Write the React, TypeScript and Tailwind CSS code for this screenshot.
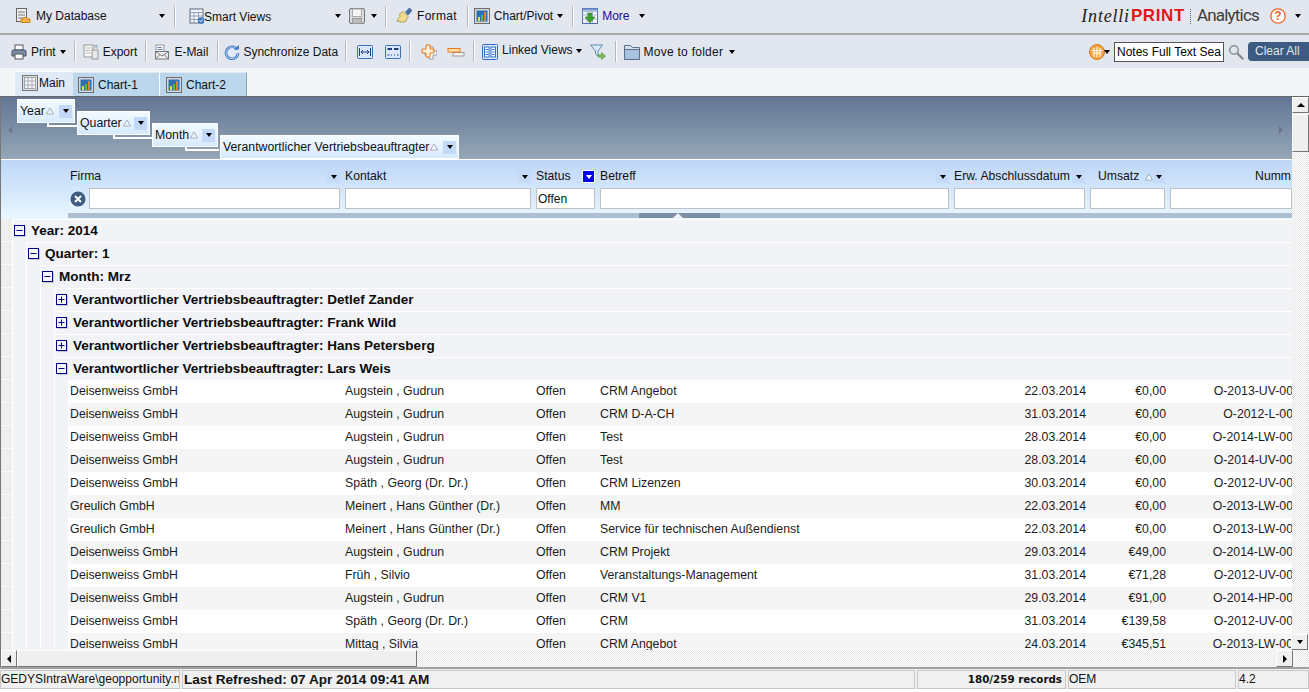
import React from "react";

const Caret = ({ className = "" }: { className?: string }) => (
  <span className={"inline-block w-0 h-0 border-l-[3.5px] border-r-[3.5px] border-t-[4px] border-l-transparent border-r-transparent border-t-black " + className} />
);
const Sep = ({ className = "" }: { className?: string }) => <span className={"w-px h-[21px] bg-[#b4b8bf] border-r border-white box-content shrink-0 " + className} />;

const Ic = ({ children, className = "" }: { children: React.ReactNode; className?: string }) => (
  <svg viewBox="0 0 16 16" width={16} height={16} className={"shrink-0 " + className}>{children}</svg>
);

const DbIcon = () => (
  <Ic>
    <rect x="1.500" y=".5" width="10" height="13" fill="#eef0f2" stroke="#666" />
    <path d="M3 4h7M3 7h7M3 10h7" stroke="#777" />
    <path d="M6 14.500V11h2l1-1.500h3l1 1.500h2v3.500z" fill="#f7b04a" stroke="#c98520" />
  </Ic>
);
const SmartIcon = () => (
  <Ic>
    <rect x="1" y="1" width="13" height="14" fill="#f4f6fa" stroke="#5a6a80" />
    <path d="M1 4.500h13M5 4.500V15M9.500 4.500V15M1 8h13M1 11.500h13" stroke="#8fa0b8" />
    <circle cx="12" cy="12.500" r="3.200" fill="#3a78c8" />
    <path d="M10.500 12.500l1.200 1.200 2-2.200" stroke="#fff" fill="none" />
  </Ic>
);
const SaveIcon = () => (
  <Ic>
    <path d="M.5 2a1.500 1.500 0 0 1 1.500-1.500h12a1.500 1.500 0 0 1 1.500 1.500v12a1.500 1.500 0 0 1-1.500 1.500H2a1.500 1.500 0 0 1-1.500-1.500z" fill="#d8dade" stroke="#777" />
    <rect x="3.500" y="1" width="9" height="7.500" fill="#f4f4f4" stroke="#aaa" />
    <rect x="3.500" y="10.500" width="9" height="5" fill="#bcbcbc" stroke="#999" />
  </Ic>
);
const BrushIcon = () => (
  <Ic>
    <path d="M9.500 4l4-4 2.500 2.500 -4 4.500z" fill="#4a6fa8" stroke="#2f4a78" strokeWidth=".6" />
    <path d="M7 3.500l5.500 5.500 -1.500 1.500 -1 3 -1.500 -.5 -1 1.500 -1.500 -1 -1.500 1 -1 -1.500 -2.500 .5 1 -3 2 -2 -.5 -2.500z" fill="#efdc8a" stroke="#8a7a30" strokeWidth=".6" />
  </Ic>
);
const ChartIcon = () => (
  <Ic>
    <rect x=".5" y=".5" width="15" height="15" fill="#d4d8dc" stroke="#6d6d6d" />
    <rect x="2.500" y="2.500" width="11" height="11" fill="#2f6fb0" />
    <rect x="4" y="9" width="2" height="4" fill="#e8e050" />
    <rect x="7" y="7" width="2" height="6" fill="#58b848" />
    <rect x="10" y="4" width="2" height="9" fill="#e88030" />
  </Ic>
);
const MoreIcon = () => (
  <Ic>
    <rect x=".5" y=".5" width="15" height="15" fill="#f4f6fa" stroke="#5070b0" />
    <path d="M.5 3.500h15M.5 7h15M.5 11h15M5 3V15M10.500 3V15" stroke="#a9bad8" />
    <path d="M.5 1.500h15" stroke="#7090d0" strokeWidth="2" />
    <path d="M6 5h4v4h3l-5 6 -5-6h3z" fill="#3fa02c" stroke="#2a7a1c" strokeWidth=".5" />
  </Ic>
);
const PrintIcon = () => (
  <Ic>
    <rect x="4" y="1" width="8" height="5" fill="#fff" stroke="#555" />
    <path d="M1 7.500a1.500 1.500 0 0 1 1.500-1.500h11a1.500 1.500 0 0 1 1.500 1.500V12H1z" fill="#7d8fa8" stroke="#3f4f68" />
    <rect x="4" y="10" width="8" height="5" fill="#fff" stroke="#555" />
  </Ic>
);
const ExportIcon = () => (
  <Ic>
    <rect x="1" y="1" width="9" height="12" fill="#f6f6f6" stroke="#999" />
    <rect x="9" y="6" width="6" height="9" fill="#e8e8e8" stroke="#999" />
    <path d="M11 1.500h3v3M14 1.500l-3 3" stroke="#9ab" fill="none" />
    <path d="M2.500 4h6M2.500 6.500h5M2.500 9h5" stroke="#bbb" />
  </Ic>
);
const MailIcon = () => (
  <Ic>
    <rect x="2" y="1" width="8" height="9" fill="#f6f6f6" stroke="#999" />
    <path d="M3.500 3.500h4M3.500 5.500h5" stroke="#5b7fb8" />
    <rect x="1.500" y="7.500" width="13" height="7.500" fill="#f0f0f0" stroke="#777" />
    <path d="M1.500 7.500L8 12l6.500-4.500M1.500 15L6 10.500M14.500 15L10 10.500" stroke="#777" fill="none" />
  </Ic>
);
const SyncIcon = () => (
  <Ic>
    <circle cx="8" cy="8.500" r="6.500" fill="#dfeafa" />
    <path d="M13 5.500A6 6 0 1 0 14 9" fill="none" stroke="#3f78c0" strokeWidth="2.600" />
    <path d="M13 5.500A6 6 0 1 0 14 9" fill="none" stroke="#b7d3f0" strokeWidth="1" />
    <path d="M10 5.500h5V1z" fill="#3f78c0" />
  </Ic>
);
const BlueBox = ({ children }: { children: React.ReactNode }) => (
  <Ic>
    <rect x=".5" y="1.500" width="15" height="13" rx="1" fill="#dbe8fa" stroke="#3f6fb8" />
    {children}
  </Ic>
);
const PlusIcon = () => (
  <Ic>
    <path d="M7 1.500h4v4h4v4h-4v4H7v-4H3v-4h4z" fill="#fff" stroke="#999" transform="translate(1 1.500)" />
    <path d="M5 1h4v4h4v4H9v4H5V9H1V5h4z" fill="#fdf0d8" stroke="#e8781c" />
  </Ic>
);
const StackIcon = () => (
  <svg viewBox="0 0 18 16" width={18} height={16} className="shrink-0">
    <rect x="6" y="8.500" width="11" height="3.500" fill="#f4f4f4" stroke="#999" />
    <rect x="1" y="4.500" width="12" height="3.500" fill="#fde2a8" stroke="#e8781c" />
  </svg>
);
const LinkedIcon = () => (
  <Ic>
    <rect x=".5" y=".5" width="15" height="15" rx="1" fill="#dbe8fa" stroke="#2f6fc8" />
    <rect x="2.500" y="3" width="4.500" height="10" fill="#fff" stroke="#2f6fc8" />
    <rect x="9" y="3" width="4.500" height="10" fill="#fff" stroke="#2f6fc8" />
    <path d="M3.500 5.500h2.500M3.500 8h2.500M3.500 10.500h2.500M10 5.500h2.500M10 8h2.500M10 10.500h2.500" stroke="#2f6fc8" />
  </Ic>
);
const FilterIcon = () => (
  <Ic>
    <path d="M.5 1h12L8 7v5L5.500 10V7z" fill="#dceaf6" stroke="#5a8ab0" />
    <path d="M8 11h3.500V8.500L15.500 12 11.500 15.500V13H8z" fill="#7cc050" stroke="#4a8a30" strokeWidth=".6" />
  </Ic>
);
const FolderIcon = () => (
  <Ic>
    <path d="M.5 1.500h6l2 2h7v12H.5z" fill="#d4e2f0" stroke="#5a7088" />
    <path d="M.5 5.500h15v10H.5z" fill="#a8c4e0" stroke="#5a7088" />
  </Ic>
);
const GlobeIcon = () => (
  <Ic>
    <circle cx="8" cy="8" r="7.500" fill="#f5a63c" stroke="#d87a18" />
    <path d="M5 4v9M8 3v10M11 4v9M2.500 6.500h11M4 9h8" stroke="#fff" strokeWidth="1.100" />
  </Ic>
);
const GlassIcon = () => (
  <Ic>
    <circle cx="6" cy="6" r="4.300" fill="#dfe6ec" stroke="#8a9298" strokeWidth="1.600" />
    <path d="M9.500 9.500l5 5" stroke="#888" strokeWidth="2.400" strokeLinecap="round" />
  </Ic>
);
const GridIcon = () => (
  <Ic>
    <rect x=".5" y=".5" width="15" height="15" fill="#dcdcdc" stroke="#777" />
    <rect x="2.500" y="2.500" width="11" height="11" fill="#f6f6f6" stroke="#9aa" />
    <path d="M6 2.500V13.500M10 2.500V13.500M2.500 6h11M2.500 10h11" stroke="#aab" />
  </Ic>
);

const Toggle = ({ open }: { open: boolean }) => (
  <svg viewBox="0 0 12 12" width={12} height={12} className="shrink-0">
    <rect x=".5" y=".5" width="10" height="10" fill="#f4f5f8" stroke="#000080" />
    <path d="M11.500 1.500V11.500H1.500" stroke="#c8c8d8" fill="none" />
    <path d="M2.500 5.500h6" stroke="#000080" />
    {!open && <path d="M5.500 2.500v6" stroke="#000080" />}
  </svg>
);

const Tri = () => (
  <svg viewBox="0 0 8 8" width={8} height={8} className="shrink-0">
    <path d="M4 1L7.500 7H.5z" fill="#ffffff" stroke="#8f98a4" strokeWidth=".8" />
    <path d="M4 3.200L5.600 6.200H2.400z" fill="#e4edf8" />
  </svg>
);

const Chip = ({ label, cls, line }: { label: string; cls: string; line?: string }) => (
  <div className={"relative h-6 flex items-center pl-[2px] pr-[2px] border border-white bg-gradient-to-b from-[#f2faff] to-[#d6eafe] shrink-0 whitespace-nowrap " + cls}>
    <span className="text-[12.3px] text-[#111]">{label}</span>
    <span className="ml-[1px]"><Tri /></span>
    <span className="ml-auto w-[13px] h-[13px] bg-[#c3d9f8] flex items-center justify-center"><Caret /></span>
    {line && <span className={"absolute h-[4px] border-b-2 border-l-2 border-white " + line} />}
  </div>
);

const H = ({ label, cls }: { label: string; cls: string }) => (
  <div className={"flex items-center justify-between " + cls}>
    <span>{label}</span>
    <span className="w-[13px] h-[13px] bg-[#c5daf8] flex items-center justify-center"><Caret /></span>
  </div>
);

const Input = ({ cls, value = "" }: { cls: string; value?: string }) => (
  <div className={"h-[21px] bg-white border border-[#c0c0c0] text-[12px] pl-[1px] leading-[20px] shrink-0 " + cls}>{value}</div>
);

const rows: string[][] = [
  ["Deisenweiss GmbH", "Augstein , Gudrun", "Offen", "CRM Angebot", "22.03.2014", "€0,00", "O-2013-UV-00"],
  ["Deisenweiss GmbH", "Augstein , Gudrun", "Offen", "CRM D-A-CH", "31.03.2014", "€0,00", "O-2012-L-00"],
  ["Deisenweiss GmbH", "Augstein , Gudrun", "Offen", "Test", "28.03.2014", "€0,00", "O-2014-LW-00"],
  ["Deisenweiss GmbH", "Augstein , Gudrun", "Offen", "Test", "28.03.2014", "€0,00", "O-2014-UV-00"],
  ["Deisenweiss GmbH", "Späth , Georg  (Dr. Dr.)", "Offen", "CRM Lizenzen", "30.03.2014", "€0,00", "O-2012-UV-00"],
  ["Greulich GmbH", "Meinert , Hans Günther (Dr.)", "Offen", "MM", "22.03.2014", "€0,00", "O-2013-LW-00"],
  ["Greulich GmbH", "Meinert , Hans Günther (Dr.)", "Offen", "Service für technischen Außendienst", "22.03.2014", "€0,00", "O-2013-LW-00"],
  ["Deisenweiss GmbH", "Augstein , Gudrun", "Offen", "CRM Projekt", "29.03.2014", "€49,00", "O-2014-LW-00"],
  ["Deisenweiss GmbH", "Früh , Silvio", "Offen", "Veranstaltungs-Management", "31.03.2014", "€71,28", "O-2012-UV-00"],
  ["Deisenweiss GmbH", "Augstein , Gudrun", "Offen", "CRM V1", "29.03.2014", "€91,00", "O-2014-HP-00"],
  ["Deisenweiss GmbH", "Späth , Georg  (Dr. Dr.)", "Offen", "CRM", "31.03.2014", "€139,58", "O-2012-UV-00"],
  ["Deisenweiss GmbH", "Mittag , Silvia", "Offen", "CRM Angebot", "24.03.2014", "€345,51", "O-2013-LW-00"],
];

const gutterW = ["w-[12px]", "w-[14px]", "w-[14px]", "w-[14px]", "w-[14px]"];
const Gutter = ({ n }: { n: number }) => (
  <>
    {gutterW.slice(0, n).map((w, i) => (
      <div key={i} className={"h-full shrink-0 border-r border-white " + w + (i === 0 ? " bg-[#eeeeee] border-b border-b-[#fafafa]" : " bg-[#f1f3f7]")} />
    ))}
  </>
);

const groups: { level: number; text: string; open: boolean }[] = [
  { level: 1, text: "Year: 2014", open: true },
  { level: 2, text: "Quarter: 1", open: true },
  { level: 3, text: "Month: Mrz", open: true },
  { level: 4, text: "Verantwortlicher Vertriebsbeauftragter: Detlef Zander", open: false },
  { level: 4, text: "Verantwortlicher Vertriebsbeauftragter: Frank Wild", open: false },
  { level: 4, text: "Verantwortlicher Vertriebsbeauftragter: Hans Petersberg", open: false },
  { level: 4, text: "Verantwortlicher Vertriebsbeauftragter: Lars Weis", open: true },
];

const dither = "bg-[repeating-conic-gradient(#e4e4e4_0_25%,#ffffff_0_50%)] bg-[length:2px_2px]";
const SB = ({ children, cls }: { children?: React.ReactNode; cls: string }) => (
  <div className={"bg-[#efefef] border border-t-white border-l-white border-r-[#777] border-b-[#777] flex items-center justify-center shrink-0 " + cls}>{children}</div>
);

export default function App() {
  return (
    <div className="w-[1309px] h-[692px] overflow-hidden flex flex-col bg-white text-[12px] text-[#111] font-['Liberation_Sans',Arial,sans-serif]">
      {/* row 1 */}
      <div className="h-[35px] shrink-0 bg-[#e1e6ef] border-b-2 border-b-[#a8a8a8] flex items-center pb-[1px]">
        <span className="ml-[15px]"><DbIcon /></span>
        <span className="ml-[5px] w-[123px]">My Database</span>
        <Caret />
        <Sep className="ml-[9px]" />
        <span className="ml-[13px]"><SmartIcon /></span>
        <span className="ml-[-1px] w-[131px] mt-[1px]">Smart Views</span>
        <Caret />
        <span className="ml-[8px]"><SaveIcon /></span>
        <Caret className="ml-[6px]" />
        <Sep className="ml-[8px]" />
        <span className="ml-[9px]"><BrushIcon /></span>
        <span className="ml-[5px] tracking-[0.3px]">Format</span>
        <Sep className="ml-[10px]" />
        <span className="ml-[5px]"><ChartIcon /></span>
        <span className="ml-[4px]">Chart/Pivot</span>
        <Caret className="ml-[4px]" />
        <Sep className="ml-[9px]" />
        <span className="ml-[8px]"><MoreIcon /></span>
        <span className="ml-[4px] text-[#1e0a9c]">More</span>
        <Caret className="ml-[9px]" />
        <div className="ml-auto flex items-center mr-[8px]">
          <span className="font-['Liberation_Serif',serif] italic text-[18px] text-[#222] tracking-[0.8px] mr-[1px]">Intelli</span>
          <span className="font-bold text-[17px] text-[#e0181c] tracking-[0.6px]">PRINT</span>
          <span className="h-[15px] ml-[5px] border-l border-dotted border-[#666]" />
          <span className="ml-[6px] text-[17px] text-[#3c3c3c] font-['Roboto',sans-serif] tracking-[-0.8px]">Analytics</span>
          <svg viewBox="0 0 16 16" width={16} height={16} className="ml-[11px]"><circle cx="8" cy="8" r="7.200" fill="#fff" stroke="#f0641e" strokeWidth="1.300" /><text x="8" y="12.300" textAnchor="middle" fontSize="12" fontWeight="700" fill="#f0641e" fontFamily="Liberation Sans">?</text></svg>
          <Caret className="ml-[9px]" />
        </div>
      </div>
      {/* row 2 */}
      <div className="h-[33px] shrink-0 bg-[#e1e6ef] flex items-center">
        <span className="ml-[11px]"><PrintIcon /></span>
        <span className="ml-[4px]">Print</span>
        <Caret className="ml-[4px]" />
        <Sep className="ml-[8px]" />
        <span className="ml-[7px]"><ExportIcon /></span>
        <span className="ml-[4px]">Export</span>
        <Sep className="ml-[8px]" />
        <span className="ml-[7px]"><MailIcon /></span>
        <span className="ml-[4px]">E-Mail</span>
        <Sep className="ml-[9px]" />
        <span className="ml-[5px]"><SyncIcon /></span>
        <span className="ml-[3px]">Synchronize Data</span>
        <Sep className="ml-[7px]" />
        <span className="ml-[10px]"><BlueBox><path d="M2.500 4v8M13.500 4v8M4 8h8M4 8l2-2M4 8l2 2M12 8l-2-2M12 8l-2 2" stroke="#203f78" fill="none" /></BlueBox></span>
        <span className="ml-[12px]"><BlueBox><path d="M2.500 5h4.500M9 5h4.500" stroke="#203f78" strokeWidth="2" /><path d="M2.500 11h2M6 11h1M9 11h1M12 11h1.500" stroke="#203f78" /></BlueBox></span>
        <Sep className="ml-[8px]" />
        <span className="ml-[10px]"><PlusIcon /></span>
        <span className="ml-[10px]"><StackIcon /></span>
        <Sep className="ml-[8px]" />
        <span className="ml-[7px]"><LinkedIcon /></span>
        <span className="ml-[4px] mb-[4px]">Linked Views</span>
        <Caret className="ml-[3px] mb-[2px]" />
        <span className="ml-[8px]"><FilterIcon /></span>
        <Sep className="ml-[9px]" />
        <span className="ml-[7px]"><FolderIcon /></span>
        <span className="ml-[4px] tracking-[0.25px]">Move to folder</span>
        <Caret className="ml-[6px]" />
        <div className="ml-auto flex items-center">
          <GlobeIcon />
          <Caret className="ml-[-1px]" />
          <div className="ml-[4px] w-[110px] h-[20px] bg-white border border-[#555] text-black pl-[2px] pr-[1px] leading-[18px] overflow-hidden whitespace-nowrap">Notes Full Text Sea</div>
          <span className="ml-[4px]"><GlassIcon /></span>
          <span className="ml-[4px] w-[61px] h-[19px] bg-[#3d5a80] rounded-l-[4px] text-[#dfe6ef] text-[12px] leading-[19px] pl-[7px]">Clear All</span>
        </div>
      </div>
      {/* tabs */}
      <div className="h-[29px] shrink-0 bg-[#f4f5f8] border-b border-b-[#666] flex items-end pl-[14px]">
        <div className="h-[25px] w-[59px] bg-[#e0e9f6] border-t border-l border-[#f8fbff] flex items-center pl-[7px] gap-[1px] pb-[3px]">
          <GridIcon /><span>Main</span>
        </div>
        <div className="h-[24px] w-[87px] bg-[#bcd6ec] border-r border-r-white border-t border-t-[#dfe9f3] flex items-center pl-[5px] gap-[4px] pt-[1px]">
          <ChartIcon /><span>Chart-1</span>
        </div>
        <div className="h-[24px] w-[87px] bg-[#bcd6ec] border-r border-r-[#8aa] border-t border-t-[#dfe9f3] flex items-center pl-[6px] gap-[4px] pt-[1px]">
          <ChartIcon /><span>Chart-2</span>
        </div>
      </div>
      {/* main */}
      <div className="h-[570px] shrink-0 flex border-l border-l-[#777]">
        <div className="w-[1291px] shrink-0 flex flex-col overflow-hidden">
          {/* group panel */}
          <div className="relative h-[63px] shrink-0 bg-gradient-to-b from-[#627595] to-[#96a8b6] flex items-start gap-[2px] pl-[16px] pt-[2px] border-b border-b-white">
            <Chip label="Year" cls="w-[58px]" line="left-[29px] top-[23px] w-[31px]" />
            <Chip label="Quarter" cls="w-[73px] mt-[12px]" line="left-[35px] top-[23px] w-[40px]" />
            <Chip label="Month" cls="w-[66px] mt-[24px]" line="left-[32px] top-[23px] w-[34px]" />
            <Chip label="Verantwortlicher Vertriebsbeauftragter" cls="w-[239px] mt-[36px]" />
            <span className="absolute left-[7px] top-[29px] w-0 h-0 border-y-[4px] border-r-[4px] border-y-transparent border-r-[#66748c]" />
            <span className="absolute right-[9px] top-[29px] w-0 h-0 border-y-[4px] border-l-[4px] border-y-transparent border-l-[#66748c]" />
          </div>
          {/* filters */}
          <div className="relative h-[59px] shrink-0 bg-gradient-to-b from-[#bdd6f8] to-[#e9f7ff]">
            <div className="flex items-center h-[13px] mt-[10px] pl-[69px] gap-[5px] whitespace-nowrap text-[12.2px]">
              <H label="Firma" cls="w-[270px]" />
              <H label="Kontakt" cls="w-[186px]" />
              <div className="w-[59px] flex items-center justify-between">
                <span>Status</span>
                <span className="w-[13px] h-[13px] bg-[#0000f0] border border-white flex items-center justify-center"><Caret className="border-t-white" /></span>
              </div>
              <H label="Betreff" cls="w-[349px]" />
              <H label="Erw. Abschlussdatum" cls="w-[131px]" />
              <div className="w-[75px] flex items-center pl-[8px]">
                <span>Umsatz</span>
                <span className="ml-[6px]"><Tri /></span>
                <span className="ml-auto w-[13px] h-[13px] bg-[#c5daf8] flex items-center justify-center"><Caret /></span>
              </div>
              <div className="w-[121px] text-right">Numm</div>
            </div>
            <div className="flex items-center h-[21px] mt-[5px] pl-[69px]">
              <svg viewBox="0 0 16 16" width={16} height={16} className="shrink-0 mr-[3px]"><circle cx="8" cy="8" r="7.500" fill="#3f5b80" /><path d="M5 5l6 6M11 5l-6 6" stroke="#fff" strokeWidth="2" /></svg>
              <Input cls="w-[251px]" />
              <Input cls="w-[186px] ml-[5px]" />
              <Input cls="w-[59px] ml-[5px]" value="Offen" />
              <Input cls="w-[349px] ml-[5px]" />
              <Input cls="w-[131px] ml-[5px]" />
              <Input cls="w-[75px] ml-[5px]" />
              <Input cls="w-[122px] ml-[5px]" />
            </div>
            <div className="flex h-[5px] mt-[4px] ml-[67px] bg-[#aebdd0]">
              <div className="relative ml-[571px] w-[81px] bg-[#7f8ea3]">
                <span className="absolute left-[34px] top-0 w-0 h-0 border-x-[5px] border-b-[5px] border-x-transparent border-b-[#eef2f6]" />
              </div>
            </div>
          </div>
          {/* groups */}
          {groups.map((g, i) => (
            <div key={i} className="h-[23px] shrink-0 flex bg-[#f1f3f7]">
              <Gutter n={g.level} />
              <div className="flex-1 flex items-center border-t border-t-white pl-[1px] gap-[5px]">
                <Toggle open={g.open} />
                <span className="font-bold text-[13.5px] text-[#0a0a0a] whitespace-nowrap">{g.text}</span>
              </div>
            </div>
          ))}
          {/* data */}
          {rows.map((r, i) => (
            <div key={i} className="h-[23px] shrink-0 flex">
              <Gutter n={5} />
              <div className={"flex-1 grid grid-cols-[275px_191px_64px_354px_132px_80px_127px] items-center whitespace-nowrap text-[12.3px] text-[#1c1c1c] pl-[1px] pb-[1px] " + (i % 2 === 0 ? "bg-white" : "bg-[#f5f5f5]")}>
                <span>{r[0]}</span>
                <span>{r[1]}</span>
                <span>{r[2]}</span>
                <span>{r[3]}</span>
                <span className="text-right">{r[4]}</span>
                <span className="text-right">{r[5]}</span>
                <span className="text-right">{r[6]}</span>
              </div>
            </div>
          ))}
        </div>
        {/* vertical scrollbar */}
        <div className={"w-[17px] shrink-0 flex flex-col " + dither}>
          <SB cls="h-[16px]"><span className="w-0 h-0 border-x-[4px] border-b-[4px] border-x-transparent border-b-black" /></SB>
          <SB cls="h-[38px] mt-[1px]" />
          <div className="flex-1" />
        </div>
      </div>
      <div className="relative h-0">
        <SB cls="absolute right-[1px] top-[-33px] w-[17px] h-[16px]"><Caret /></SB>
        <div className={"absolute left-[1px] top-[-17px] w-[1308px] h-[17px] flex " + dither}>
          <SB cls="w-[16px] h-[17px]"><span className="w-0 h-0 border-y-[4px] border-r-[4px] border-y-transparent border-r-black" /></SB>
          <SB cls="w-[400px] h-[17px]" />
          <div className="flex-1" />
          <SB cls="w-[17px] h-[17px] mr-[16px]"><span className="w-0 h-0 border-y-[4px] border-l-[4px] border-y-transparent border-l-black" /></SB>
        </div>
      </div>
      {/* status */}
      <div className="h-[22px] shrink-0 bg-[#f0f0f0] border-t-2 border-t-[#a0a0a0] flex pt-[1px] gap-[2px] text-[12px]">
        <div className="w-[180px] h-[19px] border border-[#c8c8c8] overflow-hidden whitespace-nowrap text-[12px] leading-[17px]">GEDYSIntraWare\geopportunity.nsf</div>
        <div className="w-[733px] h-[19px] border border-[#c8c8c8] font-bold text-[13.6px] leading-[17px] pl-[1px] text-[#111]">Last Refreshed: 07 Apr 2014 09:41 AM</div>
        <div className="w-[149px] h-[19px] border border-[#c8c8c8] font-bold text-right pr-[3px] leading-[17px] font-['DejaVu_Sans',sans-serif] text-[10.3px]">180/259 records</div>
        <div className="w-[168px] h-[19px] border border-[#c8c8c8] leading-[17px]">OEM</div>
        <div className="flex-1 h-[19px] border border-[#c8c8c8] leading-[17px]">4.2</div>
      </div>
    </div>
  );
}
